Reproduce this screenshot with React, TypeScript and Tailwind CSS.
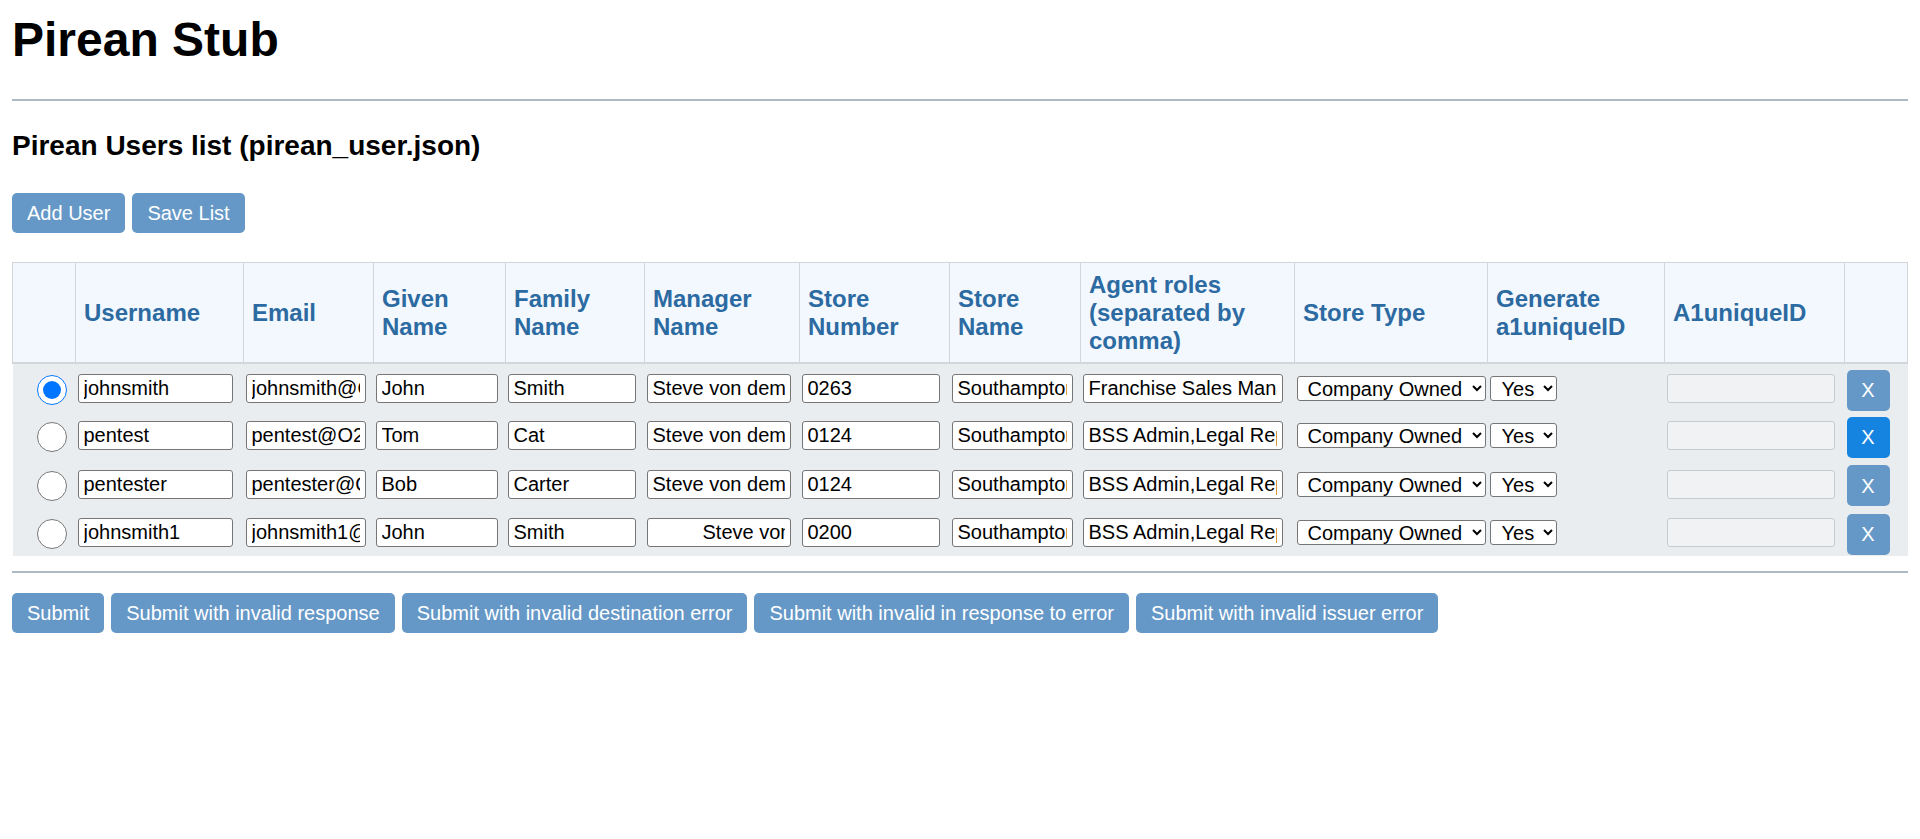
import { useState } from "react"

type UserRow = {
  username: string
  email: string
  given: string
  family: string
  manager: string
  storeNumber: string
  storeName: string
  roles: string
}

const users: UserRow[] = [
  { username: "johnsmith", email: "johnsmith@O2.com", given: "John", family: "Smith", manager: "Steve von dem Bussche", storeNumber: "0263", storeName: "Southampton", roles: "Franchise Sales Manager" },
  { username: "pentest", email: "pentest@O2.com", given: "Tom", family: "Cat", manager: "Steve von dem Bussche", storeNumber: "0124", storeName: "Southampton", roles: "BSS Admin,Legal Rep" },
  { username: "pentester", email: "pentester@O2.com", given: "Bob", family: "Carter", manager: "Steve von dem Bussche", storeNumber: "0124", storeName: "Southampton", roles: "BSS Admin,Legal Rep" },
  { username: "johnsmith1", email: "johnsmith1@O2.com", given: "John", family: "Smith", manager: "         Steve von dem Bussche", storeNumber: "0200", storeName: "Southampton", roles: "BSS Admin,Legal Rep" },
]

const headers = [
  "",
  "Username",
  "Email",
  "Given Name",
  "Family Name",
  "Manager Name",
  "Store Number",
  "Store Name",
  "Agent roles (separated by comma)",
  "Store Type",
  "Generate a1uniqueID",
  "A1uniqueID",
  "",
]

const colWidths = ["w-[63px]", "w-[168px]", "w-[130px]", "w-[132px]", "w-[139px]", "w-[155px]", "w-[150px]", "w-[131px]", "w-[214px]", "w-[193px]", "w-[177px]", "w-[180px]", "w-[63px]"]

const inputCls = "mt-[10px] h-[29px] border border-[#767676] rounded-[3px] bg-white px-[5px] text-[20px] leading-[1.15] text-black"
const btnCls = "h-[40px] px-[15px] rounded-[5px] bg-[#6598c7] text-white text-[20px] leading-[1.15] cursor-pointer"

function Cell({ children, className = "" }: { children: React.ReactNode; className?: string }) {
  return <td className={"h-[48.3px] align-top p-0 pl-[2px] " + className}>{children}</td>
}

export default function App() {
  const [selected, setSelected] = useState(0)

  return (
    <div className="min-h-screen bg-white p-3 font-['Liberation_Sans',Arial,sans-serif] text-black">
      <h1 className="text-[48px] font-bold leading-[1.15]">Pirean Stub</h1>
      <hr className="mt-[32px] h-[2px] border-0 bg-[#acbac4]" />

      <h2 className="mt-[29px] text-[28px] font-bold leading-[1.15]">Pirean Users list (pirean_user.json)</h2>

      <div className="mt-[31px] flex gap-[7px]">
        <button className={btnCls}>Add User</button>
        <button className={btnCls}>Save List</button>
      </div>

      <table className="mt-[29px] w-full table-fixed border-collapse">
        <colgroup>
          {colWidths.map((w, i) => (
            <col key={i} className={w} />
          ))}
        </colgroup>
        <thead>
          <tr className="bg-[#f3f8fe]">
            {headers.map((h, i) => (
              <th
                key={i}
                className="border border-b-2 border-[#d2d6da] px-2 py-2 text-left align-middle text-[24px] font-bold leading-[1.15] text-[#2c6aa2]"
              >
                {h}
              </th>
            ))}
          </tr>
        </thead>
        <tbody>
          {users.map((u, i) => (
            <tr key={i} className="bg-[#eaedf0]">
              <Cell className="pl-[24px]">
                <input
                  type="radio"
                  name="user"
                  checked={selected === i}
                  onChange={() => setSelected(i)}
                  className="mt-[11px] block h-[30px] w-[30px]"
                />
              </Cell>
              <Cell><input className={inputCls + " w-[155px]"} defaultValue={u.username} /></Cell>
              <Cell><input className={inputCls + " w-[120px]"} defaultValue={u.email} /></Cell>
              <Cell><input className={inputCls + " w-[122px]"} defaultValue={u.given} /></Cell>
              <Cell><input className={inputCls + " w-[128px]"} defaultValue={u.family} /></Cell>
              <Cell><input className={inputCls + " w-[144px]"} defaultValue={u.manager} /></Cell>
              <Cell><input className={inputCls + " w-[138px]"} defaultValue={u.storeNumber} /></Cell>
              <Cell><input className={inputCls + " w-[121px]"} defaultValue={u.storeName} /></Cell>
              <Cell><input className={inputCls + " w-[200px]"} defaultValue={u.roles} /></Cell>
              <Cell>
                <select
                  defaultValue="Company Owned"
                  className="mt-[12px] h-[25px] w-[189px] rounded-[3px] border border-[#767676] bg-white pl-[6px] text-[20px] leading-[1.15] text-black"
                >
                  <option>Company Owned</option>
                  <option>Franchise</option>
                </select>
              </Cell>
              <Cell>
                <select
                  defaultValue="Yes"
                  className="mt-[12px] h-[25px] w-[67px] rounded-[3px] border border-[#767676] bg-white pl-[7px] text-[20px] leading-[1.15] text-black"
                >
                  <option>Yes</option>
                  <option>No</option>
                </select>
              </Cell>
              <Cell>
                <input
                  readOnly
                  className="mt-[10px] h-[29px] w-[168px] rounded-[3px] border border-[#c8cacc] bg-[#f1f2f4] px-[5px] text-[20px]"
                  defaultValue=""
                />
              </Cell>
              <Cell>
                <button
                  className={
                    "mt-[5.5px] h-[41px] w-[43px] rounded-[5px] text-[20px] text-white " +
                    (i === 1 ? "bg-[#1584e0]" : "bg-[#6598c7]")
                  }
                >
                  X
                </button>
              </Cell>
            </tr>
          ))}
        </tbody>
      </table>

      <hr className="mt-[15px] h-[2px] border-0 bg-[#acbac4]" />

      <div className="mt-[20px] flex gap-[7px]">
        <button className={btnCls}>Submit</button>
        <button className={btnCls}>Submit with invalid response</button>
        <button className={btnCls}>Submit with invalid destination error</button>
        <button className={btnCls}>Submit with invalid in response to error</button>
        <button className={btnCls}>Submit with invalid issuer error</button>
      </div>
    </div>
  )
}
